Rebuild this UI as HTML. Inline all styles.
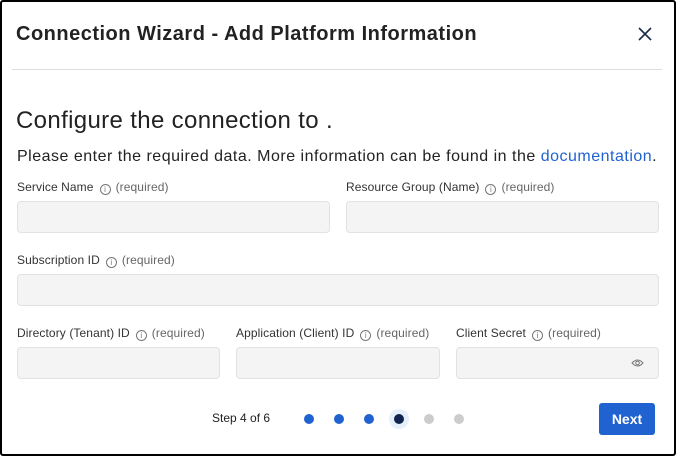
<!DOCTYPE html>
<html><head><style>
*{box-sizing:border-box;margin:0;padding:0}
body{width:676px;height:456px;background:#fff;font-family:"Liberation Sans",sans-serif;position:relative;overflow:hidden}
.frame{position:absolute;left:0;top:0;width:676px;height:456px;border:2px solid #000;border-radius:3px}
.a{position:absolute;white-space:nowrap}
h1{position:absolute;left:16px;top:23px;font-size:20px;font-weight:bold;color:#222;letter-spacing:0.5px}
.hr{position:absolute;left:12px;top:69px;width:650px;height:1px;background:#ddd}
.lbl{position:absolute;font-size:12px;color:#333;white-space:nowrap;letter-spacing:0.1px}
.lbl i{font-style:normal;color:#666}
.info{display:inline-block;width:11px;height:11px;border:1px solid #777;border-radius:50%;font-size:8px;line-height:9px;text-align:center;color:#777;margin:0 5px 0 6px;vertical-align:-1px;font-style:normal}
.in{position:absolute;height:32px;background:#f4f4f4;border:1px solid #e2e2e2;border-radius:4px}
.dot{position:absolute;width:10px;height:10px;border-radius:50%;top:414px}
</style></head><body>
<div class="frame"></div>
<h1>Connection Wizard - Add Platform Information</h1>
<svg class="a" style="left:638px;top:27px" width="14" height="14" viewBox="0 0 14 14"><path d="M1 1L13 13M13 1L1 13" stroke="#1a2b4a" stroke-width="1.6"/></svg>
<div class="hr"></div>
<div class="a" style="left:16px;top:107px;font-size:24px;color:#222;letter-spacing:0.35px">Configure the connection to .</div>
<div class="a" style="left:17px;top:148px;font-size:16px;color:#222;letter-spacing:0.5px">Please enter the required data. More information can be found in the <span style="color:#1f62d0">documentation</span>.</div>
<div class="lbl" style="left:17px;top:180px">Service Name<span class="info">i</span><i>(required)</i></div>
<div class="lbl" style="left:346px;top:180px">Resource Group (Name)<span class="info">i</span><i>(required)</i></div>
<div class="in" style="left:17px;top:201px;width:313px"></div>
<div class="in" style="left:346px;top:201px;width:313px"></div>
<div class="lbl" style="left:17px;top:253px">Subscription ID<span class="info">i</span><i>(required)</i></div>
<div class="in" style="left:17px;top:274px;width:642px"></div>
<div class="lbl" style="left:17px;top:326px">Directory (Tenant) ID<span class="info">i</span><i>(required)</i></div>
<div class="lbl" style="left:236px;top:326px">Application (Client) ID<span class="info">i</span><i>(required)</i></div>
<div class="lbl" style="left:456px;top:326px">Client Secret<span class="info">i</span><i>(required)</i></div>
<div class="in" style="left:17px;top:347px;width:203px"></div>
<div class="in" style="left:236px;top:347px;width:204px"></div>
<div class="in" style="left:456px;top:347px;width:203px"></div>
<svg class="a" style="left:631px;top:358px" width="13" height="10" viewBox="0 0 13 10"><path d="M1 5Q6.5 -1 12 5Q6.5 11 1 5Z" fill="none" stroke="#777" stroke-width="1"/><circle cx="6.5" cy="5" r="1.8" fill="none" stroke="#777" stroke-width="1"/></svg>
<div class="a" style="left:212px;top:411px;font-size:12px;color:#222">Step 4 of 6</div>
<div class="dot" style="left:304px;background:#1f62d0"></div>
<div class="dot" style="left:334px;background:#1f62d0"></div>
<div class="dot" style="left:364px;background:#1f62d0"></div>
<div class="a" style="left:389px;top:409px;width:20px;height:20px;border-radius:50%;background:#e6f0fb"></div>
<div class="dot" style="left:394px;background:#0f2550"></div>
<div class="dot" style="left:424px;background:#ccc"></div>
<div class="dot" style="left:454px;background:#ccc"></div>
<div class="a" style="left:599px;top:403px;width:56px;height:32px;background:#1f62d0;border-radius:3px;color:#fff;font-weight:bold;font-size:14px;text-align:center;line-height:32px">Next</div>
</body></html>
